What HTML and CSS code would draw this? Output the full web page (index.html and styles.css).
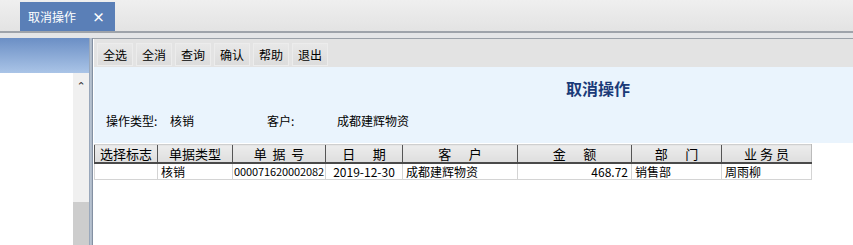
FILE: index.html
```html
<!DOCTYPE html>
<html lang="zh-CN">
<head>
    <meta charset="UTF-8">
    <meta name="viewport" content="width=device-width, initial-scale=1.0">
    <title>取消操作</title>
    <link rel="stylesheet" href="styles.css">
</head>
<body>
    <div class="topbar">
        <div class="tab">
            <span class="tab-title">取消操作</span>
            <span class="tab-close">×</span>
        </div>
    </div>

    <div class="workspace">
        <div class="sidebar">
            <div class="sidebar-head"></div>
            <div class="sidebar-body">
                <div class="sidebar-list"></div>
                <div class="scrollbar">
                    <div class="scroll-up">&#8963;</div>
                    <div class="scroll-thumb"></div>
                </div>
            </div>
        </div>
        <div class="splitter"></div>

        <div class="main">
            <div class="toolbar">
                <span class="tool-btn">全选</span>
                <span class="tool-btn">全消</span>
                <span class="tool-btn">查询</span>
                <span class="tool-btn">确认</span>
                <span class="tool-btn">帮助</span>
                <span class="tool-btn">退出</span>
            </div>

            <div class="info-panel">
                <div class="panel-title">取消操作</div>
                <div class="info-row">
                    <span class="info-label op-label">操作类型:</span>
                    <span class="info-value op-value">核销</span>
                    <span class="info-label cust-label">客户:</span>
                    <span class="info-value">成都建辉物资</span>
                </div>
            </div>

            <div class="grid-area">
                <table class="grid">
                    <colgroup>
                        <col style="width:63px">
                        <col style="width:75px">
                        <col style="width:93px">
                        <col style="width:77px">
                        <col style="width:115px">
                        <col style="width:114px">
                        <col style="width:90px">
                        <col style="width:90px">
                    </colgroup>
                    <thead>
                        <tr>
                            <th>选择标志</th>
                            <th>单据类型</th>
                            <th>单&nbsp;&nbsp;据&nbsp;&nbsp;号</th>
                            <th>日&nbsp;&nbsp;&nbsp;&nbsp;&nbsp;&nbsp;期</th>
                            <th>客&nbsp;&nbsp;&nbsp;&nbsp;&nbsp;&nbsp;户</th>
                            <th>金&nbsp;&nbsp;&nbsp;&nbsp;&nbsp;&nbsp;额</th>
                            <th>部&nbsp;&nbsp;&nbsp;&nbsp;&nbsp;&nbsp;门</th>
                            <th>业&nbsp;务&nbsp;员</th>
                        </tr>
                    </thead>
                    <tbody>
                        <tr>
                            <td></td>
                            <td>核销</td>
                            <td class="num-cell">000071620002082</td>
                            <td class="center">2019-12-30</td>
                            <td>成都建辉物资</td>
                            <td class="right">468.72</td>
                            <td>销售部</td>
                            <td>周雨柳</td>
                        </tr>
                    </tbody>
                </table>
            </div>
        </div>
    </div>
</body>
</html>
```

FILE: styles.css
```css
* {
    box-sizing: border-box;
}

body {
    margin: 0;
    width: 853px;
    height: 245px;
    overflow: hidden;
    background: #e4e5e7;
    font-family: "Noto Sans CJK SC", "Liberation Sans", sans-serif;
    font-size: 12px;
    color: #000;
}

/* верхняя полоса с вкладкой */
.topbar {
    height: 33px;
    padding: 2px 0 0 20px;
    background: linear-gradient(#efefef, #e3e3e3);
    border-bottom: 2px solid #9ea3aa;
}

.tab {
    width: 95px;
    height: 29px;
    background: #5a7fb7;
    color: #fff;
    display: flex;
    align-items: center;
    padding-left: 8px;
    font-size: 12px;
}

.tab-title {
    width: 64px;
}

.tab-close {
    font-weight: bold;
    font-size: 13px;
}

.workspace {
    display: flex;
    height: 212px;
    margin-top: 5px;
}

/* левая панель */
.sidebar {
    width: 89px;
    display: flex;
    flex-direction: column;
    background: #fff;
}

.sidebar-head {
    height: 35px;
    background: linear-gradient(#6b8fc5, #aac4e7);
}

.sidebar-body {
    flex: 1;
    display: flex;
}

.sidebar-list {
    flex: 1;
}

.scrollbar {
    width: 16px;
    background: #f0f0f0;
    display: flex;
    flex-direction: column;
}

.scroll-up {
    height: 22px;
    text-align: center;
    font-size: 11px;
    line-height: 28px;
    color: #333;
    font-family: "DejaVu Sans", sans-serif;
}

.scroll-thumb {
    margin-top: auto;
    height: 48px;
    background: #cdcdcd;
}

.splitter {
    width: 4px;
    background: linear-gradient(90deg, #8a9ab0, #c5cfdb 50%, #6e7c90);
}

/* основная область */
.main {
    flex: 1;
    display: flex;
    flex-direction: column;
    background: #fff;
    border-top: 1px solid #9aa0a8;
    padding-left: 1px;
}

.toolbar {
    height: 28px;
    background: #e3e3e3;
    display: flex;
    align-items: flex-end;
    gap: 3px;
    padding: 0 0 1px 3px;
}

.tool-btn {
    width: 36px;
    height: 23px;
    line-height: 22px;
    text-align: center;
    background: linear-gradient(#e8e8e8, #dcdcdc);
    border: 1px solid #ececec;
    font-size: 12px;
}

.info-panel {
    height: 76px;
    background: #eaf4fd;
    padding-top: 10px;
}

.panel-title {
    padding-left: 472px;
    font-size: 16px;
    font-weight: bold;
    color: #1b3a78;
    line-height: 22px;
}

.info-row {
    display: flex;
    margin-top: 14px;
    padding-left: 12px;
    font-size: 12px;
    line-height: 16px;
}

.op-label {
    width: 64px;
}

.op-value {
    width: 97px;
}

.cust-label {
    width: 70px;
}

.grid-area {
    flex: 1;
    background: #fff;
    padding-top: 1px;
}

.grid {
    border-collapse: collapse;
    table-layout: fixed;
    width: 717px;
    font-size: 12px;
}

.grid th {
    height: 18px;
    padding: 0;
    font-weight: normal;
    font-size: 13px;
    background: linear-gradient(#ececec, #dedede);
    border-left: 1px solid #555;
    border-bottom: 2px solid #4a4a4a;
    border-top: 1px solid #cfcfcf;
    text-align: center;
    white-space: nowrap;
    line-height: 15px;
}

.grid th:last-child {
    border-right: 1px solid #bbb;
}

.grid td {
    height: 17px;
    padding: 0 3px;
    border: 1px solid #d4d4d4;
    white-space: nowrap;
    overflow: hidden;
    line-height: 15px;
}

.grid td.num-cell {
    padding: 0 1px;
    font-size: 11px;
    letter-spacing: -0.1px;
}

.grid td.center {
    text-align: center;
}

.grid td.right {
    text-align: right;
}
```
